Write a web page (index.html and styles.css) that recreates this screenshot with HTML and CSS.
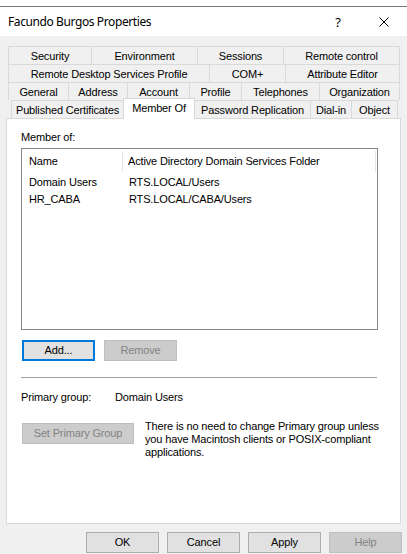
FILE: index.html
```
<!DOCTYPE html>
<html>
<head>
<meta charset="utf-8">
<link rel="stylesheet" href="styles.css">
</head>
<body>
<div class="top"></div>
<div class="topline"></div>
<div class="titlebar">
  <span class="title">Facundo Burgos Properties</span>
  <span class="tbtn qm">?</span>
  <span class="tbtn">
    <svg width="10" height="10" viewBox="0 0 10 10"><path d="M0.5 0.5 L9.5 9.5 M9.5 0.5 L0.5 9.5" stroke="#000" stroke-width="1" fill="none"/></svg>
  </span>
</div>
<div class="tabs">
  <div class="tabrow">
    <div class="tab w83">Security</div>
    <div class="tab w106">Environment</div>
    <div class="tab w86">Sessions</div>
    <div class="tab w117">Remote control</div>
  </div>
  <div class="tabrow">
    <div class="tab w201">Remote Desktop Services Profile</div>
    <div class="tab w76">COM+</div>
    <div class="tab w115">Attribute Editor</div>
  </div>
  <div class="tabrow">
    <div class="tab w60">General</div>
    <div class="tab w59">Address</div>
    <div class="tab w62">Account</div>
    <div class="tab w52">Profile</div>
    <div class="tab w78">Telephones</div>
    <div class="tab w81">Organization</div>
  </div>
  <div class="tabrow last">
    <div class="tab w112">Published Certificates</div>
    <div class="tab sel w72">Member Of</div>
    <div class="tab w115">Password Replication</div>
    <div class="tab w41">Dial-in</div>
    <div class="tab w47">Object</div>
  </div>
</div>
<div class="panel">
  <div class="label">Member of:</div>
  <div class="list">
    <div class="lhead">
      <div class="hc c1">Name</div>
      <div class="hc c2">Active Directory Domain Services Folder</div>
    </div>
    <div class="lrow"><span class="c1">Domain Users</span><span class="c2">RTS.LOCAL/Users</span></div>
    <div class="lrow"><span class="c1">HR_CABA</span><span class="c2">RTS.LOCAL/CABA/Users</span></div>
  </div>
  <div class="btnrow">
    <div class="btn default">Add...</div>
    <div class="btn disabled">Remove</div>
  </div>
  <div class="sep"></div>
  <div class="primary">
    <span class="plabel">Primary group:</span>
    <span>Domain Users</span>
  </div>
  <div class="setrow">
    <div class="btn disabled wide">Set Primary Group</div>
    <div class="desc">There is no need to change Primary group unless<br>you have Macintosh clients or POSIX-compliant<br>applications.</div>
  </div>
</div>
<div class="footer">
  <div class="btn">OK</div>
  <div class="btn">Cancel</div>
  <div class="btn">Apply</div>
  <div class="btn disabled">Help</div>
</div>
</body>
</html>
```

FILE: styles.css
```
* { box-sizing: border-box; }
body {
  margin: 0;
  width: 407px;
  height: 554px;
  overflow: hidden;
  background: #f0f0f0;
  font-family: "Liberation Sans", Arial, sans-serif;
  font-size: 11px;
  letter-spacing: -0.15px;
  color: #000;
}
.top { height: 6px; background: #fff; }
.topline { height: 1px; background: #7a7a7a; }
.titlebar {
  height: 29px;
  background: #fff;
  display: flex;
  align-items: center;
}
.title {
  flex: 1;
  padding-left: 8px;
  font-family: "Noto Sans", sans-serif;
  font-size: 12px;
  letter-spacing: -0.4px;
}
.tbtn {
  width: 46px;
  height: 29px;
  display: flex;
  align-items: center;
  justify-content: center;
}
.qm { font-family: "Noto Sans", sans-serif; font-size: 13px; }

.tabs { margin-top: 10px; padding-left: 8px; }
.tabrow { display: flex; height: 18px; }
.tabrow.last { padding-left: 3px; }
.tab {
  height: 18px;
  border-top: 1px solid #d9d9d9;
  border-left: 1px solid #d9d9d9;
  background: #f0f0f0;
  text-align: center;
  line-height: 18px;
  white-space: nowrap;
}
.tab:last-child { border-right: 1px solid #d9d9d9; }
.tab.sel {
  position: relative;
  z-index: 1;
  background: #fff;
  border-right: 1px solid #d9d9d9;
  height: 21px;
  margin-top: -2px;
  line-height: 18px;
}
.tab.sel + .tab { border-left: none; }
.w41 { width: 41px; } .w47 { width: 47px; } .w52 { width: 52px; }
.w59 { width: 59px; } .w60 { width: 60px; } .w62 { width: 62px; }
.w72 { width: 72px; } .w76 { width: 76px; } .w78 { width: 78px; }
.w81 { width: 81px; } .w83 { width: 83px; } .w86 { width: 86px; }
.w106 { width: 106px; } .w112 { width: 112px; } .w115 { width: 115px; }
.w117 { width: 117px; } .w201 { width: 201px; }

.panel {
  margin-left: 6px;
  width: 395px;
  height: 406px;
  background: #fff;
  border: 1px solid #d9d9d9;
  padding-left: 14px;
}
.label { margin-top: 12px; line-height: 13px; }
.list {
  margin-top: 4px;
  width: 357px;
  height: 182px;
  border: 1px solid #828790;
}
.lhead { display: flex; align-items: center; height: 25px; }
.hc { height: 21px; line-height: 21px; border-right: 1px solid #e5e5e5; }
.hc.c1 { width: 101px; padding-left: 7px; }
.hc.c2 { flex: 1; padding-left: 5px; margin-right: 1px; }
.lrow { display: flex; height: 17px; line-height: 17px; }
.lrow .c1 { width: 101px; padding-left: 7px; }
.lrow .c2 { padding-left: 6px; }

.btn {
  width: 73px;
  height: 21px;
  line-height: 19px;
  text-align: center;
  background: #e1e1e1;
  border: 1px solid #adadad;
}
.btn.default { border: 2px solid #0078d7; line-height: 17px; }
.btn.disabled { background: #cccccc; border-color: #bfbfbf; color: #838383; }
.btn.wide { width: 112px; }
.btnrow { display: flex; gap: 9px; margin-top: 10px; padding-left: 1px; }
.sep { margin-top: 16px; width: 356px; height: 1px; background: #a0a0a0; }
.primary { margin-top: 13px; line-height: 13px; display: flex; }
.plabel { width: 94px; }
.setrow { display: flex; margin-top: 16px; padding-left: 1px; }
.setrow .btn { margin-top: 3px; }
.desc { margin-left: 11px; line-height: 13px; }

.footer {
  display: flex;
  justify-content: flex-end;
  gap: 8px;
  margin-top: 8px;
  padding-right: 5px;
}
```
